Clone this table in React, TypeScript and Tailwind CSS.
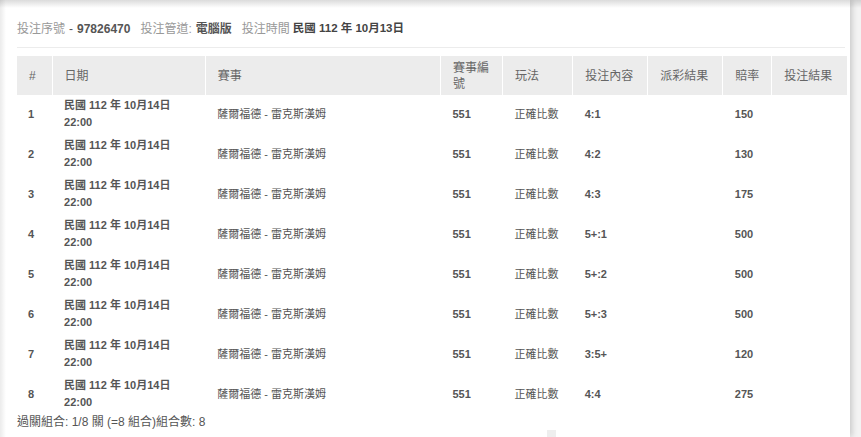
import React from "react";

const rows = [
  { n: 1, c: "4:1", o: "150" },
  { n: 2, c: "4:2", o: "130" },
  { n: 3, c: "4:3", o: "175" },
  { n: 4, c: "5+:1", o: "500" },
  { n: 5, c: "5+:2", o: "500" },
  { n: 6, c: "5+:3", o: "500" },
  { n: 7, c: "3:5+", o: "120" },
  { n: 8, c: "4:4", o: "275" },
];

const widths = [35, 153, 235, 62, 70, 75, 75, 49, 75];
const heads = ["#", "日期", "賽事", "賽事編號", "玩法", "投注內容", "派彩結果", "賠率", "投注結果"];

export default function App() {
  return (
    <div
      className="relative w-[861px] h-[437px] overflow-hidden bg-[#f3f3f3] flex text-[12px] text-[#555]"
      style={{ fontFamily: '"Liberation Sans", Arial, "Noto Sans CJK TC", sans-serif' }}
    >
      <div className="w-[850px] h-full bg-white shadow-[2px_0_6px_rgba(0,0,0,0.18)] pl-[17px] pr-[4px] flex flex-col">
        <div className="h-[48px] shrink-0 flex items-center pt-[10px] border-b border-[#ececec] mr-[1px]">
          <span className="text-[#999]">投注序號</span>
          <span className="ml-[4px] mr-[4px]">-</span>
          <span className="font-bold">97826470</span>
          <span className="text-[#999] ml-[10px]">投注管道:</span>
          <span className="ml-[4px] font-bold">電腦版</span>
          <span className="text-[#999] ml-[10px]">投注時間</span>
          <span className="ml-[3px] font-bold text-[#444] text-[11.5px]">民國 112 年 10月13日</span>
        </div>
        <table className="mt-[8px] shrink-0 table-fixed border-collapse w-[830px]">
          <colgroup>
            {widths.map((w, i) => (
              <col key={i} style={{ width: w }} />
            ))}
          </colgroup>
          <thead>
            <tr className="h-[39px] bg-[#ececec]">
              {heads.map((h, i) => (
                <th
                  key={i}
                  className={`font-normal text-left align-middle pl-[12px] pr-[4px] leading-[16px] text-[#666] ${
                    i > 0 ? "border-l border-white" : "pl-[11px]"
                  } ${i === 3 ? "pr-[10px]" : ""}`}
                >
                  {h}
                </th>
              ))}
            </tr>
          </thead>
          <tbody className="text-[11px]">
            {rows.map((r) => (
              <tr key={r.n} className="h-[40px]">
                <td className="pl-[11px] pb-[2px] align-middle font-bold">{r.n}</td>
                <td className="pl-[12px] pb-[2px] align-middle font-bold leading-[17px]">
                  民國 112 年 10月14日
                  <br />
                  22:00
                </td>
                <td className="pl-[12px] pb-[2px] align-middle">薩爾福德 - 雷克斯漢姆</td>
                <td className="pl-[12px] pb-[2px] align-middle font-bold">551</td>
                <td className="pl-[12px] pb-[2px] align-middle">正確比數</td>
                <td className="pl-[12px] pb-[2px] align-middle font-bold">{r.c}</td>
                <td className="pl-[12px] pb-[2px] align-middle"></td>
                <td className="pl-[12px] pb-[2px] align-middle font-bold">{r.o}</td>
                <td className="pl-[12px] pb-[2px] align-middle"></td>
              </tr>
            ))}
          </tbody>
        </table>
        <div className="leading-[14px] mt-[0px] shrink-0 text-[#555]">過關組合: 1/8 關 (=8 組合)組合數: 8</div>
        <div className="ml-[530px] mt-[1px] shrink-0 w-[9px] h-[10px] bg-[#eeeeee]"></div>
      </div>
      <div className="absolute inset-x-0 top-0 h-[8px] bg-gradient-to-b from-[rgba(0,0,0,0.14)] to-transparent pointer-events-none" />
      <div className="absolute left-0 inset-y-0 w-[6px] bg-gradient-to-r from-[rgba(0,0,0,0.08)] to-transparent pointer-events-none" />
    </div>
  );
}
